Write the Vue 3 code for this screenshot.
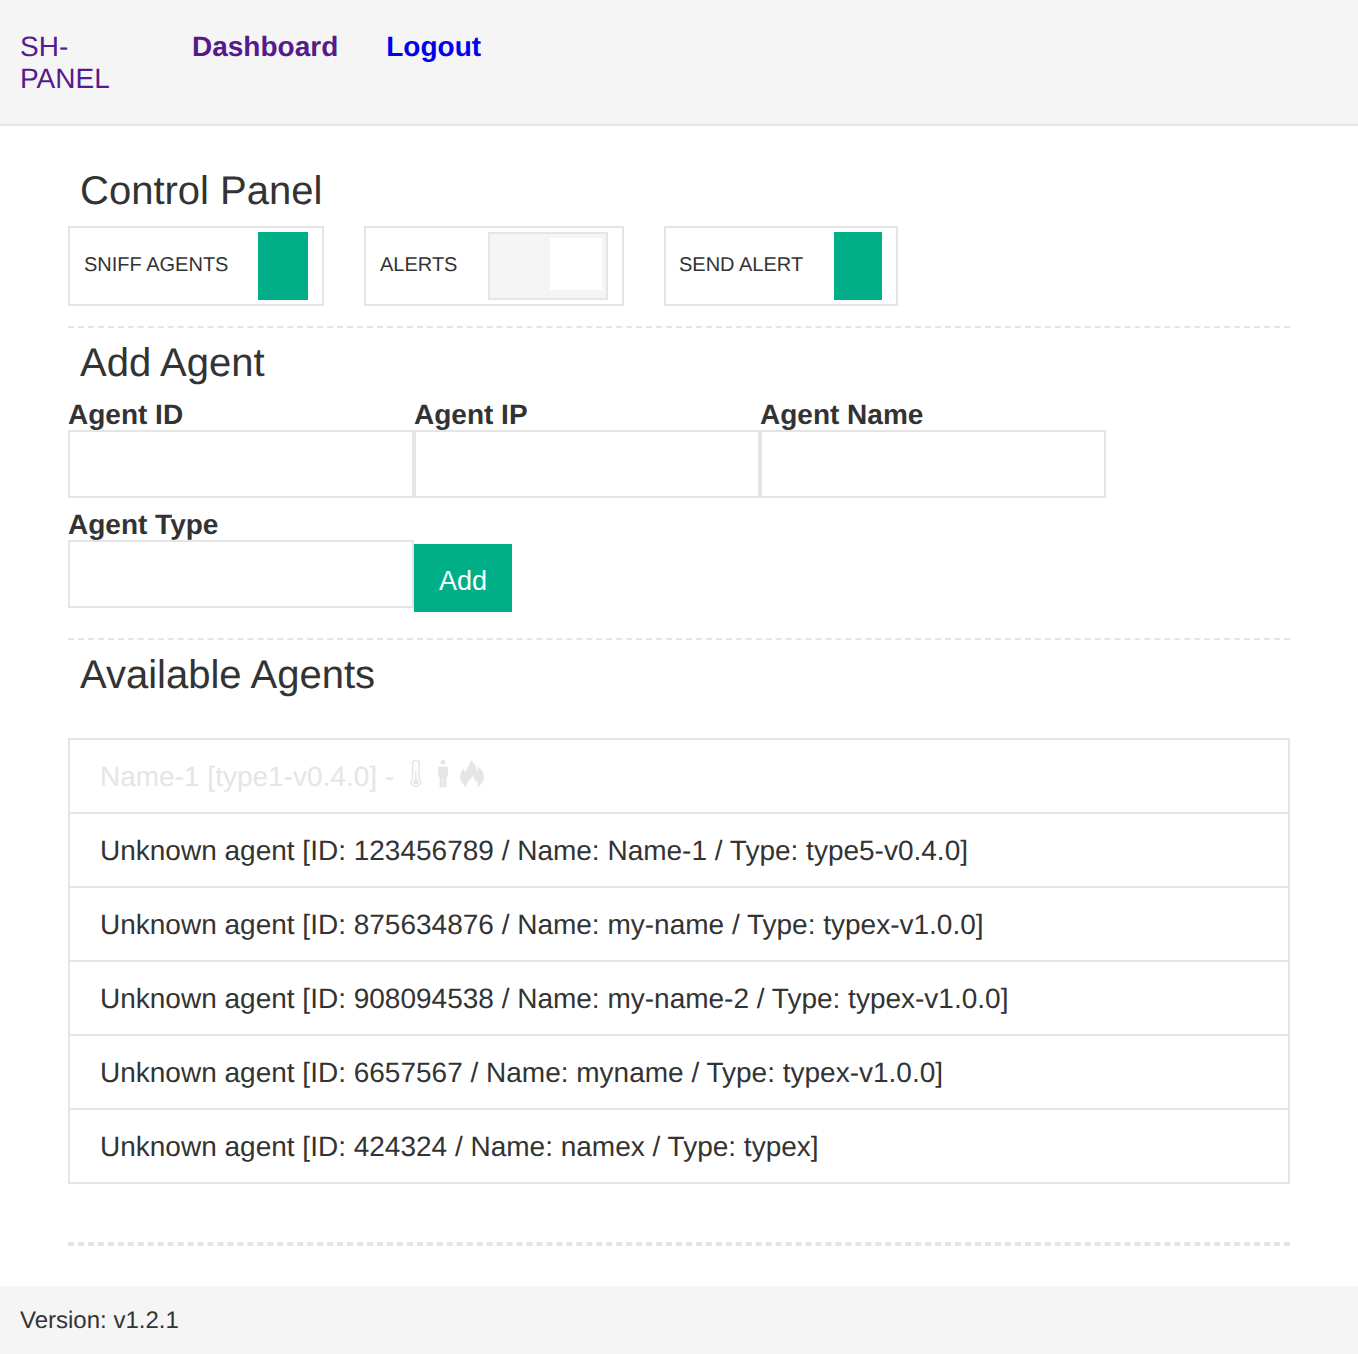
<script setup>
const agents = [
  'Unknown agent [ID: 123456789 / Name: Name-1 / Type: type5-v0.4.0]',
  'Unknown agent [ID: 875634876 / Name: my-name / Type: typex-v1.0.0]',
  'Unknown agent [ID: 908094538 / Name: my-name-2 / Type: typex-v1.0.0]',
  'Unknown agent [ID: 6657567 / Name: myname / Type: typex-v1.0.0]',
  'Unknown agent [ID: 424324 / Name: namex / Type: typex]',
]
const fields = ['Agent ID', 'Agent IP', 'Agent Name', 'Agent Type']
</script>

<template>
  <div class="page">
    <header class="header">
      <a class="brand">SH-<br />PANEL</a>
      <a class="link visited">Dashboard</a>
      <a class="link">Logout</a>
    </header>

    <main class="main">
      <section class="controls">
        <h1>Control Panel</h1>
        <div class="panels">
          <div class="panel sniff">
            <span>SNIFF AGENTS</span>
            <button class="action" aria-label="Sniff agents"></button>
          </div>
          <div class="panel alerts">
            <span>ALERTS</span>
            <div class="toggle"><div class="knob"></div></div>
          </div>
          <div class="panel send">
            <span>SEND ALERT</span>
            <button class="action" aria-label="Send alert"></button>
          </div>
        </div>
      </section>

      <section class="add">
        <h1>Add Agent</h1>
        <form class="form" @submit.prevent>
          <label v-for="f in fields" :key="f" class="field">
            <span>{{ f }}</span>
            <input type="text" />
          </label>
          <button class="submit">Add</button>
        </form>
      </section>

      <section class="available">
        <h1>Available Agents</h1>
        <ul class="list">
          <li class="known">
            <span>Name-1 [type1-v0.4.0] -</span>
            <svg class="thermo" width="12" height="30" viewBox="0 0 12 30">
              <path d="M2.600 19V4.500a3.200 3.200 0 0 1 6.400 0V19a4.700 4.700 0 1 1-6.400 0z" fill="none" stroke="currentColor" stroke-width="1.500" />
              <path d="M5.100 11.500h1.400v9h-1.400z" fill="currentColor" />
              <circle cx="5.800" cy="22.700" r="2.500" fill="currentColor" />
            </svg>
            <svg class="person" width="12" height="30" viewBox="0 0 12 30">
              <circle cx="6" cy="3.300" r="2.500" fill="currentColor" />
              <path d="M3 7.500h6c1.200 0 1.900.8 1.900 1.900v7.400c0 .7-.4 1.100-1 1.100h-.5v10.600H6.300V18.500H5.700v10H2.600V17.900h-.5c-.6 0-1-.4-1-1.100V9.400c0-1.100.7-1.900 1.900-1.900z" fill="currentColor" />
            </svg>
            <svg class="flame" width="26" height="30" viewBox="0 0 26 30">
              <path d="M8 28.500C3.600 25.800 1 21.800 1 17.800C1 14.200 2.700 12.100 4.500 9.200C4.700 11.200 5.100 12.500 6 13.400C7.400 9 11.600 6.500 11.300.9C15.200 3.800 17.600 7.200 17.300 12.300C18.600 11.200 19 9.700 18.700 7.300C22.800 10.600 25 14 25 18C25 22.200 22.500 25.800 18.300 28.500C19.200 25.600 18.900 23.500 17.500 21C17.200 22.200 16.700 22.900 16 23.200C16 20.300 15 18.300 13 16.700C12.900 19.500 10.300 20.700 8.700 23.300C7.500 25.300 7.400 26.700 8 28.500z" fill="currentColor" />
            </svg>
          </li>
          <li v-for="a in agents" :key="a">{{ a }}</li>
        </ul>
      </section>
      <div class="divider"></div>
    </main>

    <footer class="footer">Version: v1.2.1</footer>
  </div>
</template>

<style>
body {
  margin: 0;
  background: #fff;
}
</style>

<style scoped>
.page,
.page * {
  box-sizing: border-box;
}
.page {
  height: 1354px;
  display: flex;
  flex-direction: column;
  font: 28px/32px 'Liberation Sans', Arial, sans-serif;
  color: #333;
  text-rendering: geometricPrecision;
}
.header {
  display: flex;
  align-items: flex-start;
  height: 126px;
  padding: 31px 20px 0;
  background: #f5f5f5;
  border-bottom: 2px solid #e5e5e5;
}
.brand {
  width: 172px;
  color: #551a8b;
}
.link {
  margin-right: 48px;
  font-weight: bold;
  color: #0000ee;
}
.visited {
  color: #551a8b;
}
.main {
  flex: 1;
  padding: 42px 68px 0;
}
h1 {
  margin: 0;
  padding-left: 12px;
  font-size: 40px;
  line-height: 46px;
  font-weight: normal;
}
section {
  border-bottom: 2px dashed #e5e5e5;
}
.controls {
  height: 160px;
}
.panels {
  display: flex;
  gap: 40px;
  margin-top: 12px;
}
.panel {
  display: flex;
  justify-content: space-between;
  height: 80px;
  padding: 4px 14px;
  border: 2px solid #e5e5e5;
  font-size: 20px;
  line-height: 66px;
  white-space: nowrap;
}
.sniff {
  width: 256px;
}
.alerts {
  width: 260px;
}
.send {
  width: 234px;
}
.send span {
  margin-left: -1px;
}
.action {
  width: 48px;
  height: 68px;
  padding: 0;
  border: 0;
  background: #00ae88;
}
.sniff .action {
  width: 50px;
}
.toggle {
  display: flex;
  justify-content: flex-end;
  width: 120px;
  height: 68px;
  padding: 4px;
  background: #f5f5f5;
  border: 2px solid #e5e5e5;
}
.knob {
  width: 52px;
  height: 52px;
  background: #fff;
}
.add {
  height: 312px;
  padding-top: 12px;
}
.form {
  display: flex;
  flex-wrap: wrap;
  align-items: flex-start;
  width: 1100px;
  margin-top: 12px;
  row-gap: 10px;
}
.field {
  display: flex;
  flex-direction: column;
  width: 346px;
  font-weight: bold;
}
.field span {
  height: 32px;
  line-height: 34px;
}
.field input {
  width: 346px;
  height: 68px;
  padding: 0 16px;
  border: 2px solid #e5e5e5;
  border-radius: 0;
  outline: none;
  background: #fff;
  font: inherit;
}
.submit {
  width: 98px;
  height: 68px;
  margin-top: 36px;
  padding: 5px 0 0;
  border: 0;
  background: #00ae88;
  color: #fff;
  font: 27px/32px 'Liberation Sans', Arial, sans-serif;
}
.available {
  height: 604px;
  padding-top: 12px;
}
.list {
  margin: 40px 0 0;
  padding: 0;
  list-style: none;
  border: 2px solid #e5e5e5;
}
.list li {
  display: flex;
  align-items: center;
  height: 74px;
  padding: 2px 30px 0;
  border-bottom: 2px solid #e5e5e5;
}
.list li:last-child {
  height: 72px;
  border-bottom: 0;
}
.list .known {
  color: #e5e5e5;
}
.known svg {
  flex: none;
  margin-top: -6px;
}
.thermo {
  margin-left: 16px;
}
.person {
  margin-left: 15px;
}
.flame {
  margin-left: 10px;
}
.divider {
  border-top: 2px dashed #e5e5e5;
}
.footer {
  height: 68px;
  padding: 21px 20px 0;
  background: #f5f5f5;
  font-size: 24px;
  line-height: 27px;
}
</style>
